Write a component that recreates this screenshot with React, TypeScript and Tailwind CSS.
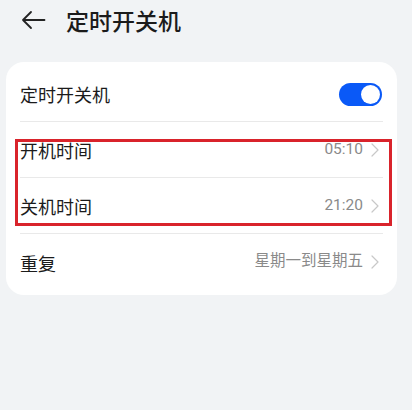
const FONT = 'font-["Noto_Sans_CJK_SC","Noto_Sans",sans-serif]';

function BackArrow() {
  return (
    <svg width="25" height="20" viewBox="0 0 25 20" fill="none">
      <path d="M23.5 10H2M10 2L2 10l8 8" stroke="#222" strokeWidth="1.8" strokeLinecap="round" strokeLinejoin="round" />
    </svg>
  );
}

function Chevron() {
  return (
    <svg width="8" height="14" viewBox="0 0 8 14" fill="none" className="ml-[8px]">
      <path d="M1 1l6 6-6 6" stroke="#c8c8c8" strokeWidth="1.2" strokeLinecap="round" strokeLinejoin="round" />
    </svg>
  );
}

function Row({ label, value, divider = true }: { label: string; value?: string; divider?: boolean }) {
  return (
    <div className="px-[14px]">
      <div className={`h-[56px] flex items-center justify-between ${divider ? 'border-b border-[#e9e9e9]' : ''}`}>
        <span className="text-[18px] text-[#1b1b1b] pt-[2px]">{label}</span>
        <div className="flex items-center pr-[4px]">
          <span className='text-[15.5px] text-[#8a8a8a] font-["Roboto","Noto_Sans_CJK_SC",sans-serif]'>{value}</span>
          <Chevron />
        </div>
      </div>
    </div>
  );
}

export default function App() {
  return (
    <div className={`w-[412px] h-[410px] bg-[#f1f3f5] ${FONT}`}>
      <div className="h-[40px] flex items-center pl-[21px]">
        <BackArrow />
        <span className="ml-[20px] text-[23px] font-medium text-[#1b1b1b]">定时开关机</span>
      </div>

      <div className="mt-[22px] ml-[6px] w-[391px] bg-white rounded-[18px] py-[5px]">
        <div className="px-[14px]">
          <div className="h-[55px] flex items-center justify-between border-b border-[#e9e9e9]">
            <span className="text-[18px] text-[#1b1b1b]">定时开关机</span>
            <div className="w-[43px] h-[23px] rounded-full bg-[#0a59f7] flex items-center justify-end pr-[2px] mr-[1px]">
              <div className="w-[19px] h-[19px] rounded-full bg-white" />
            </div>
          </div>
        </div>

        <div className="relative">
          <Row label="开机时间" value="05:10" />
          <Row label="关机时间" value="21:20" />
          <div className="absolute left-[9px] top-[17px] w-[377px] h-[87px] border-[3px] border-[#d9232b]" />
        </div>

        <Row label="重复" value="星期一到星期五" divider={false} />
      </div>
    </div>
  );
}
